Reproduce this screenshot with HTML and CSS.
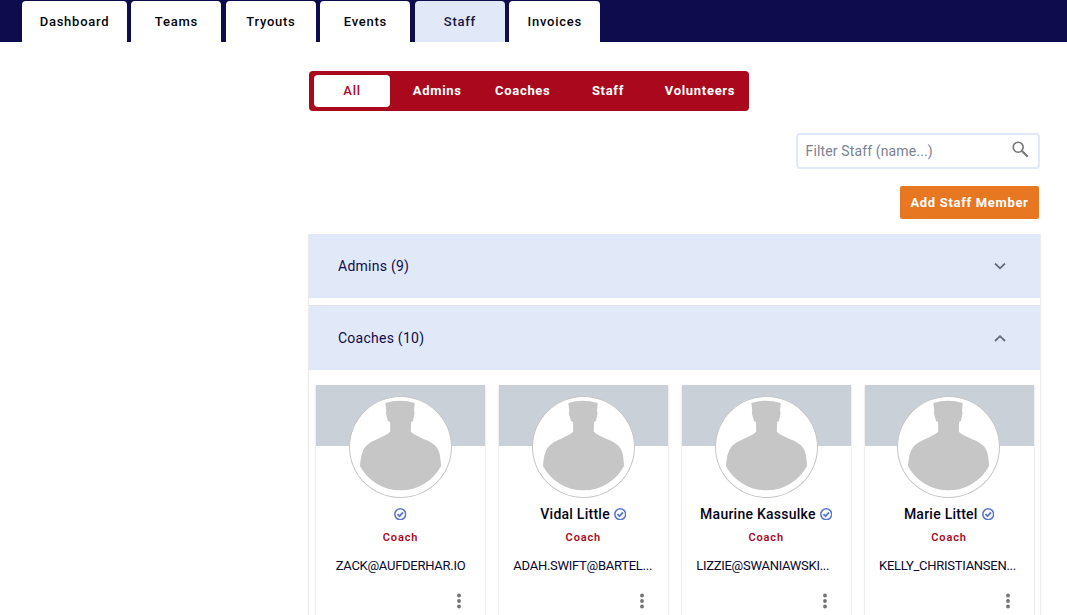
FILE: index.html
```
<!DOCTYPE html>
<html lang="en">
<head>
<meta charset="utf-8">
<title>Staff</title>
<link rel="stylesheet" href="styles.css">
</head>
<body>
<svg class="defs" width="0" height="0" aria-hidden="true">
  <symbol id="person" viewBox="0 0 102 102">
    <path d="M35.500 6Q50.500 1.500 65.500 6L64.800 14L65.300 16.500L63.800 24.500L61.800 25.500L61.500 35.500Q66 39.500 75 43Q90 48 91.300 60L92.500 70A47 47.500 0 0 1 9.500 70L11 60Q13 48 27 43Q36 39.500 40.500 35.500L40.300 25.500L38.300 24.500L36 16.500L36.500 14Z" fill="#c6c6c6"/>
  </symbol>
  <symbol id="verified" viewBox="0 0 12 12">
    <circle cx="6" cy="6" r="5.200" fill="none" stroke="#5b78cb" stroke-width="1.500"/>
    <path d="M3.300 5.900L5.300 7.800L8.700 4.200" fill="none" stroke="#5b78cb" stroke-width="1.800"/>
  </symbol>
  <symbol id="more" viewBox="0 0 4 16">
    <circle cx="2" cy="2.500" r="1.900"/><circle cx="2" cy="8" r="1.900"/><circle cx="2" cy="13.500" r="1.900"/>
  </symbol>
</svg>
<nav class="tabs">
  <a class="tab tab-wide">Dashboard</a>
  <a class="tab">Teams</a>
  <a class="tab">Tryouts</a>
  <a class="tab">Events</a>
  <a class="tab tab-active">Staff</a>
  <a class="tab tab-last">Invoices</a>
</nav>
<main class="content">
  <div class="roles">
    <a class="role role-active">All</a>
    <a class="role role-admins">Admins</a>
    <a class="role role-coaches">Coaches</a>
    <a class="role role-staff">Staff</a>
    <a class="role role-volunteers">Volunteers</a>
  </div>
  <label class="search">
    <span class="placeholder">Filter Staff (name...)</span>
    <svg class="search-icon" viewBox="0 0 17 17"><circle cx="6.200" cy="6.200" r="5" fill="none" stroke="#757575" stroke-width="1.600"/><path d="M10 10L15.700 15.700" stroke="#757575" stroke-width="2.100"/></svg>
  </label>
  <button class="add">Add Staff Member</button>
  <section class="panels">
    <div class="panel-head"><span>Admins (9)</span><svg class="chevron" viewBox="0 0 12 8"><path d="M1 1.500L6 6.300L11 1.500"/></svg></div>
    <div class="panel-head panel-open"><span>Coaches (10)</span><svg class="chevron" viewBox="0 0 12 8"><path d="M1 7L6 2.200L11 7"/></svg></div>
    <div class="cards">
      <article class="card">
        <div class="avatar"><svg><use href="#person"/></svg></div>
        <h3 class="name"><svg class="verified"><use href="#verified"/></svg></h3>
        <p class="position">Coach</p>
        <p class="email">ZACK@AUFDERHAR.IO</p>
        <svg class="more"><use href="#more"/></svg>
      </article>
      <article class="card">
        <div class="avatar"><svg><use href="#person"/></svg></div>
        <h3 class="name">Vidal Little<svg class="verified"><use href="#verified"/></svg></h3>
        <p class="position">Coach</p>
        <p class="email">ADAH.SWIFT@BARTEL...</p>
        <svg class="more"><use href="#more"/></svg>
      </article>
      <article class="card">
        <div class="avatar"><svg><use href="#person"/></svg></div>
        <h3 class="name">Maurine Kassulke<svg class="verified"><use href="#verified"/></svg></h3>
        <p class="position">Coach</p>
        <p class="email">LIZZIE@SWANIAWSKI...</p>
        <svg class="more"><use href="#more"/></svg>
      </article>
      <article class="card">
        <div class="avatar"><svg><use href="#person"/></svg></div>
        <h3 class="name">Marie Littel<svg class="verified"><use href="#verified"/></svg></h3>
        <p class="position">Coach</p>
        <p class="email">KELLY_CHRISTIANSEN...</p>
        <svg class="more"><use href="#more"/></svg>
      </article>
    </div>
  </section>
</main>
</body>
</html>
```
FILE: styles.css
```
* { box-sizing: border-box; }
body { margin: 0; height: 615px; overflow: hidden; background: #fff; color: #0f0c4d; font-family: Roboto, sans-serif; }
.defs { display: none; }
.tabs { display: flex; gap: 4.300px; height: 42px; padding: 1px 0 0 22px; background: #0f0c4d; }
.tab { width: 90.200px; border-radius: 4px 4px 0 0; background: #fff; color: #050508; font-size: 13px; font-weight: 500; letter-spacing: .75px; line-height: 41px; text-align: center; }
.tab-wide { width: 105px; }
.tab-last { width: 91px; }
.tab-active { background: #e1e8f8; color: #17153f; }
.content { display: flex; flex-direction: column; width: 731px; height: 544px; overflow: hidden; padding: 0 2px; box-sizing: content-box; margin: 29px 0 0 307px; }
.roles { display: flex; width: 440px; height: 40px; flex: none; padding: 4px 0 4px 5px; border-radius: 4px; background: #aa091d; }
.role { color: #fff; font-size: 13px; font-weight: 700; letter-spacing: .7px; line-height: 32px; text-align: center; }
.role-active { width: 76px; margin-right: 4px; border-radius: 4px; background: #fff; color: #aa091d; font-weight: 500; }
.role-admins { width: 86.500px; }
.role-coaches { width: 84.500px; }
.role-staff { width: 86px; }
.role-volunteers { width: 98px; }
.search { display: flex; flex: none; align-items: center; justify-content: space-between; align-self: flex-end; width: 244px; height: 36px; margin-top: 22px; padding: 0 9px 0 7.500px; border: 2px solid #e1e8f8; border-radius: 4px; }
.placeholder { color: #7b8190; font-size: 14px; letter-spacing: .14px; }
.search-icon { width: 17px; height: 17px; margin-top: -3px; }
.add { flex: none; align-self: flex-end; width: 139px; height: 33px; margin: 17px 1px 15px 0; padding: 0; border: 0; border-radius: 2px; background: #e87722; color: #fff; font: 700 13px Roboto, sans-serif; letter-spacing: .68px; }
.panels { flex: none; height: 382px; padding-top: 1px; margin-top: -1px; box-shadow: 0 1px 2px rgba(0, 0, 0, .22); }
.panel-head { display: flex; align-items: center; justify-content: space-between; height: 64px; padding: 0 34px 0 29px; background: #e1e8f8; font-size: 14px; letter-spacing: .25px; }
.panel-open { height: 65px; margin-top: 7px; border-top: 1px solid #dfe1e5; }
.chevron { width: 12px; height: 8px; fill: none; stroke: #666c76; stroke-width: 1.800; }
.cards { display: grid; grid-template-columns: repeat(4, 169px); gap: 13.850px; height: 246px; overflow: hidden; padding: 15px 7px 0; }
.card { display: flex; flex-direction: column; align-items: center; height: 231px; padding-top: 10.500px; background: linear-gradient(#cad0d8 61px, #fff 61px); box-shadow: 0 1px 2px rgba(0, 0, 0, .2); }
.avatar { flex: none; width: 103px; height: 102px; margin-right: .300px; border: 1px solid #c6c6c6; border-radius: 50%; background: #fff; }
.avatar svg { display: block; width: 101px; height: 100px; }
.name { display: flex; align-items: center; gap: 4px; height: 20px; margin: 6.500px 0 0; color: #050519; font-size: 14px; font-weight: 500; letter-spacing: .25px; line-height: 20px; }
.verified { width: 12.500px; height: 12.500px; }
.position { margin: 6px 0 0; color: #aa091d; font-size: 11px; font-weight: 600; letter-spacing: .85px; line-height: 16px; }
.email { align-self: flex-start; margin: 11px 0 0; padding-left: 14.500px; color: #08062f; font-size: 13px; letter-spacing: -.27px; line-height: 18px; }
.card:first-child .email { align-self: center; padding: 0; }
.more { align-self: flex-end; width: 4px; height: 16px; margin: 18px 23.800px 0 0; fill: #737373; }
```
